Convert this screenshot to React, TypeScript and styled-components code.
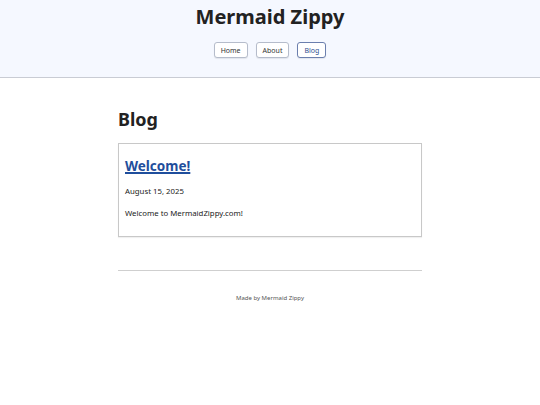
import styled, { createGlobalStyle } from 'styled-components';

let Global = createGlobalStyle`
  html, body {
    margin: 0;
    padding: 0;
    background: #fff;
    font-family: "Noto Sans", "Open Sans", sans-serif;
    color: #222;
  }
`;

let Header = styled.header`
  background: #f5f8ff;
  border-bottom: 1px solid #c9ccd4;
  height: 78px;
  box-sizing: border-box;
  display: flex;
  flex-direction: column;
  align-items: center;
  padding-top: 3px;
`;

let SiteTitle = styled.h1`
  margin: 0;
  font-size: 20px;
  font-weight: 700;
  line-height: 28px;
  color: #222;
`;

let Nav = styled.nav`
  display: flex;
  gap: 8px;
  margin-top: 11px;
`;

let NavButton = styled.a<{ $active?: boolean }>`
  display: flex;
  align-items: center;
  justify-content: center;
  height: 16px;
  padding: 0 6px;
  box-sizing: border-box;
  border: 1px solid ${(p) => (p.$active ? '#6b7fae' : '#b5bccb')};
  border-radius: 3px;
  background: #fff;
  font-size: 7px;
  color: ${(p) => (p.$active ? '#2c4f8f' : '#333')};
  text-decoration: none;
  box-shadow: 0 1px 1px rgba(0, 0, 0, 0.08);
`;

let Main = styled.main`
  width: 304px;
  margin: 0 auto;
  padding-top: 29px;
`;

let PageTitle = styled.h2`
  margin: 0 0 12px;
  font-size: 18px;
  font-weight: 700;
  line-height: 24px;
  color: #222;
`;

let Card = styled.article`
  border: 1px solid #c8c8c8;
  padding: 13px 6px 17px;
  box-shadow: 0 1px 1px rgba(0, 0, 0, 0.06);
`;

let PostLink = styled.a`
  display: block;
  font-size: 13.5px;
  font-weight: 700;
  line-height: 18px;
  color: #1f4e9c;
  text-decoration: underline;
  text-decoration-thickness: 1.5px;
`;

let PostText = styled.p`
  margin: 0;
  font-size: 7.8px;
  line-height: 11px;
  color: #222;
`;

let PostDate = styled(PostText)`
  margin: 11px 0 11px;
`;

let Footer = styled.footer`
  margin-top: 33px;
  border-top: 1px solid #cfcfcf;
  padding-top: 23px;
  text-align: center;
  font-size: 6px;
  color: #555;
`;

export default function App() {
  return (
    <>
      <Global />
      <Header>
        <SiteTitle>Mermaid Zippy</SiteTitle>
        <Nav>
          <NavButton href="#">Home</NavButton>
          <NavButton href="#">About</NavButton>
          <NavButton href="#" $active>
            Blog
          </NavButton>
        </Nav>
      </Header>
      <Main>
        <PageTitle>Blog</PageTitle>
        <Card>
          <PostLink href="#">Welcome!</PostLink>
          <PostDate>August 15, 2025</PostDate>
          <PostText>Welcome to MermaidZippy.com!</PostText>
        </Card>
        <Footer>Made by Mermaid Zippy</Footer>
      </Main>
    </>
  );
}
